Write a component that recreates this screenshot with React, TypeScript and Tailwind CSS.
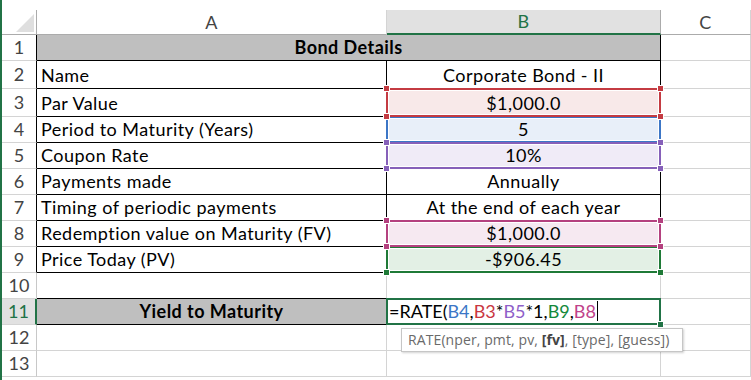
import React from "react";

type HL = {
  box: string;
  sq: string;
  z: string;
};

const RED: HL = { box: "border-[#c43b42] bg-[#f8e9e9]", sq: "bg-[#c43b42]", z: "z-20" };
const BLUE: HL = { box: "border-[#3c76c6] bg-[#e8eff9]", sq: "bg-[#3c76c6]", z: "z-10" };
const PURPLE: HL = { box: "border-[#8660b9] bg-[#f0ebf7]", sq: "bg-[#8660b9]", z: "z-20" };
const MAGENTA: HL = { box: "border-[#b4417f] bg-[#f6e9f1]", sq: "bg-[#b4417f]", z: "z-20" };
const GREEN: HL = { box: "border-[#1f7a37] bg-[#e3f0e5]", sq: "bg-[#1f7a37]", z: "z-10" };

function Squares({ cls }: { cls: string }) {
  const base = "absolute w-[7px] h-[7px] border border-white " + cls;
  return (
    <>
      <div className={base + " -left-[5px] -top-[5px]"} />
      <div className={base + " -right-[5px] -top-[5px]"} />
      <div className={base + " -left-[5px] -bottom-[5px]"} />
      <div className={base + " -right-[5px] -bottom-[5px]"} />
    </>
  );
}

function Highlight({ hl, text }: { hl: HL; text: string }) {
  return (
    <div className="relative flex items-end justify-center pb-[3px] leading-[20px] border-r border-b border-[#d4d4d4]">
      <div
        className={
          "pointer-events-none absolute -left-px -right-px -top-px -bottom-px border-2 shadow-[inset_0_0_0_1px_#ffffff] " +
          hl.box +
          " " +
          hl.z
        }
      >
        <Squares cls={hl.sq} />
      </div>
      <span className="relative z-30">{text}</span>
    </div>
  );
}

function RowHead({ n, table, active }: { n: number; table?: boolean; active?: boolean }) {
  if (active) {
    return (
      <div className="flex items-center justify-center pb-px border-b border-b-[#d4d4d4] border-r-2 border-r-[#217346] bg-[#e1e1e1] text-[#217346] text-[18px] tracking-normal">
        {n}
      </div>
    );
  }
  return (
    <div
      className={
        "flex items-center justify-center pb-px border-b border-b-[#d4d4d4] border-r text-[#444444] text-[18px] tracking-normal bg-white " +
        (table ? "border-r-black" : "border-r-[#c8c8c8]")
      }
    >
      {n}
    </div>
  );
}

function ACell({ text }: { text: string }) {
  return (
    <div className="flex items-end pl-[4px] pb-[3px] leading-[20px] border-r border-b border-black whitespace-nowrap">
      {text}
    </div>
  );
}

function BCell({ text }: { text: string }) {
  return (
    <div className="flex items-end justify-center pb-[3px] leading-[20px] border-r border-b border-black whitespace-nowrap">
      {text}
    </div>
  );
}

function CCell() {
  return <div className="border-r border-b border-[#d4d4d4]" />;
}

export default function App() {
  return (
    <div className="w-[751px] h-[380px] overflow-hidden bg-white border-l-2 border-[#217346] font-['Lato',sans-serif] text-[18px] tracking-[0.45px] text-black">
      <div className="h-[10px]" />
      <div className="grid grid-cols-[35px_350px_274px_90px] grid-rows-[25px_26px_28px_28px_26px_26px_26px_26px_26px_26px_26px_26px_26px_26px]">
        {/* header row */}
        <div className="relative border-r border-b border-[#ababab] bg-white">
          <svg className="absolute left-0 top-0" width="35" height="25" viewBox="0 0 35 25">
            <polygon points="32,4 32,22 14,22" fill="#dfdfdf" />
          </svg>
        </div>
        <div className="flex items-center justify-center border-r border-r-[#d4d4d4] border-b border-b-[#ababab] bg-white text-[#444444]">
          A
        </div>
        <div className="flex items-center justify-center border-r border-r-[#ababab] border-b-2 border-b-[#217346] bg-[#e1e1e1] text-[#217346]">
          B
        </div>
        <div className="flex items-center justify-center border-r border-r-[#d4d4d4] border-b border-b-[#ababab] bg-white text-[#444444]">
          C
        </div>

        {/* row 1 */}
        <RowHead n={1} table />
        <div className="col-span-2 flex items-end justify-center pb-[3px] leading-[20px] border-r border-b border-black bg-[#bfbfbf] font-bold">
          Bond Details
        </div>
        <CCell />

        {/* row 2 */}
        <RowHead n={2} table />
        <ACell text="Name" />
        <BCell text="Corporate Bond - II" />
        <CCell />

        {/* row 3 */}
        <RowHead n={3} table />
        <ACell text="Par Value" />
        <Highlight hl={RED} text="$1,000.0" />
        <CCell />

        {/* row 4 */}
        <RowHead n={4} table />
        <ACell text="Period to Maturity (Years)" />
        <Highlight hl={BLUE} text="5" />
        <CCell />

        {/* row 5 */}
        <RowHead n={5} table />
        <ACell text="Coupon Rate" />
        <Highlight hl={PURPLE} text="10%" />
        <CCell />

        {/* row 6 */}
        <RowHead n={6} table />
        <ACell text="Payments made" />
        <BCell text="Annually" />
        <CCell />

        {/* row 7 */}
        <RowHead n={7} table />
        <ACell text="Timing of periodic payments" />
        <BCell text="At the end of each year" />
        <CCell />

        {/* row 8 */}
        <RowHead n={8} table />
        <ACell text="Redemption value on Maturity (FV)" />
        <Highlight hl={MAGENTA} text="$1,000.0" />
        <CCell />

        {/* row 9 */}
        <RowHead n={9} table />
        <ACell text="Price Today (PV)" />
        <Highlight hl={GREEN} text="-$906.45" />
        <CCell />

        {/* row 10 */}
        <RowHead n={10} />
        <div className="border-r border-r-[#d4d4d4] border-b border-b-black" />
        <div className="border-r border-b border-[#d4d4d4]" />
        <CCell />

        {/* row 11 */}
        <RowHead n={11} active />
        <div className="flex items-end justify-center pb-[3px] leading-[20px] border-r border-b border-black bg-[#bfbfbf] font-bold">
          Yield to Maturity
        </div>
        <div className="relative flex items-end pl-[2px] pb-[3px] leading-[20px] border-r border-b border-[#d4d4d4] whitespace-nowrap tracking-normal">
          <div className="pointer-events-none absolute -left-px -right-px -top-px -bottom-px border-2 border-[#217346] z-20">
            <div className="absolute w-[7px] h-[7px] border border-white bg-[#217346] -right-[5px] -bottom-[5px]" />
          </div>
          <span className="relative z-30">
            =RATE(<span className="text-[#3c76c6]">B4</span>,<span className="text-[#c9373f]">B3</span>*
            <span className="text-[#8f5fc9]">B5</span>*1,<span className="text-[#14893a]">B9</span>,
            <span className="text-[#c0428a]">B8</span>
          </span>
          <span className="relative z-30 ml-px inline-block w-px h-[20px] bg-black" />
          <div className="absolute left-[14px] top-[29px] z-40 w-[282px] h-[24px] flex items-center pl-[6px] bg-white border border-[#c6c6c6] shadow-[1px_1px_2px_rgba(0,0,0,0.18)] font-['Open_Sans',sans-serif] text-[14px] tracking-[0.1px] text-[#6a6a6a] leading-[20px]">
            RATE(nper, pmt, pv,&nbsp;<span className="font-bold text-[#444444]">[fv]</span>, [type], [guess])
          </div>
        </div>
        <CCell />

        {/* row 12 */}
        <RowHead n={12} />
        <div className="border-r border-b border-[#d4d4d4]" />
        <div className="border-r border-b border-[#d4d4d4]" />
        <CCell />

        {/* row 13 */}
        <RowHead n={13} />
        <div className="border-r border-b border-[#d4d4d4]" />
        <div className="border-r border-b border-[#d4d4d4]" />
        <CCell />
      </div>
    </div>
  );
}
